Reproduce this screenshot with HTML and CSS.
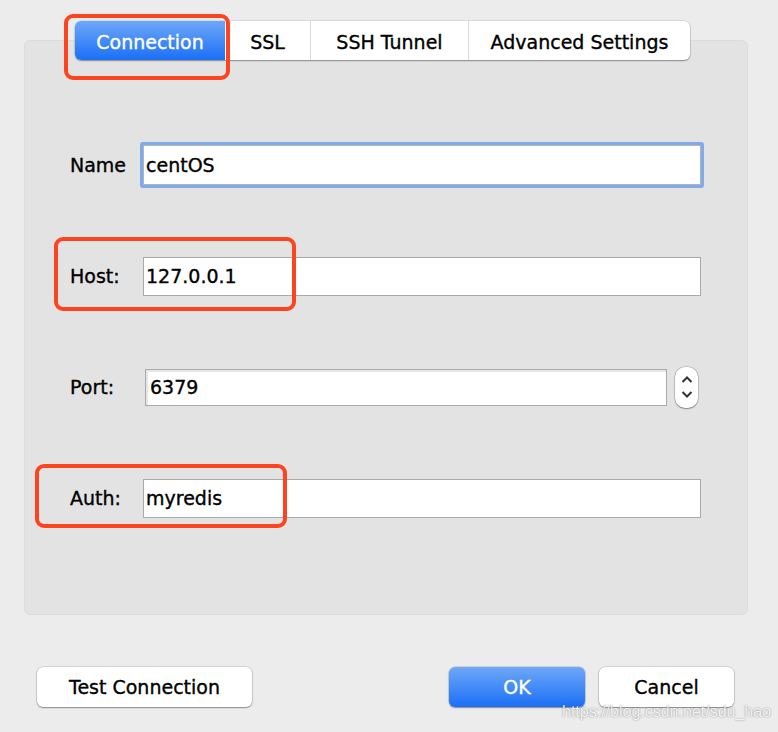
FILE: index.html
```html
<!DOCTYPE html>
<html lang="en">
<head>
    <meta charset="UTF-8">
    <meta name="viewport" content="width=device-width, initial-scale=1.0">
    <title>Connection</title>
    <link rel="stylesheet" href="styles.css">
</head>
<body>

    <div class="window">
        <div class="panel">
            <!-- Tabs -->
            <div class="tabs">
                <div class="tab tab-active tab-conn">Connection</div>
                <div class="tab tab-ssl">SSL</div>
                <div class="tab tab-ssh">SSH Tunnel</div>
                <div class="tab tab-adv">Advanced Settings</div>
            </div>

            <!-- Form -->
            <div class="form">
                <div class="row">
                    <span class="label">Name</span>
                    <div class="field field-focus">centOS</div>
                </div>
                <div class="row">
                    <span class="label">Host:</span>
                    <div class="field">127.0.0.1</div>
                </div>
                <div class="row">
                    <span class="label">Port:</span>
                    <div class="field field-port">6379</div>
                    <div class="stepper">
                        <svg width="12" height="30" viewBox="0 0 12 30">
                            <path d="M1.5 10 L6 5.5 L10.5 10" fill="none" stroke="#333" stroke-width="2"/>
                            <path d="M1.5 20 L6 24.5 L10.5 20" fill="none" stroke="#333" stroke-width="2"/>
                        </svg>
                    </div>
                </div>
                <div class="row">
                    <span class="label">Auth:</span>
                    <div class="field">myredis</div>
                </div>
            </div>
        </div>

        <!-- Buttons -->
        <div class="actions">
            <button class="btn btn-test">Test Connection</button>
            <div class="actions-right">
                <button class="btn btn-primary btn-ok">OK</button>
                <button class="btn btn-cancel">Cancel</button>
            </div>
        </div>

        <!-- Annotations -->
        <div class="mark mark-conn"></div>
        <div class="mark mark-host"></div>
        <div class="mark mark-auth"></div>
        <div class="watermark">https://blog.csdn.net/sdu_hao</div>
    </div>

</body>
</html>
```

FILE: styles.css
```css
body {
    margin: 0;
    padding: 0;
    background: #ececec;
    font-family: "DejaVu Sans", sans-serif;
    font-size: 19px;
    color: #000;
    -webkit-text-stroke: 0.35px currentColor;
}
.window {
    position: relative;
    width: 778px;
    height: 732px;
    padding-top: 40px;
    box-sizing: border-box;
}
.panel {
    margin-left: 24px;
    width: 724px;
    height: 575px;
    box-sizing: border-box;
    background: #e3e3e3;
    border: 1px solid #dcdcdc;
    border-radius: 6px;
}
.tabs {
    display: flex;
    width: 615px;
    height: 39px;
    margin-top: -20px;
    margin-left: 50px;
    background: white;
    border-radius: 6px;
    box-shadow: 0 0 0 0.5px rgba(0, 0, 0, 0.15), 0 1px 1.5px rgba(0, 0, 0, 0.35);
}
.tab {
    display: flex;
    align-items: center;
    justify-content: center;
    height: 39px;
    padding-top: 2px;
    border-right: 1px solid #dadada;
    box-sizing: border-box;
}
.tab:last-child {
    border-right: none;
}
.tab-active {
    color: white;
    background: linear-gradient(#6ea8f8, #1b6ff6);
    border-radius: 6px 0 0 6px;
    border-right: none;
}
.tab-conn { width: 150px; }
.tab-ssl { width: 86px; }
.tab-ssh { width: 158px; }
.tab-adv { width: 221px; }

.form {
    display: flex;
    flex-direction: column;
    gap: 71px;
    padding-top: 85px;
    padding-left: 45px;
}
.row {
    display: flex;
    align-items: center;
    height: 40px;
}
.label {
    width: 73px;
}
.field {
    width: 558px;
    height: 39px;
    box-sizing: border-box;
    background: white;
    border: 1px solid #aaa;
    padding-left: 2px;
    display: flex;
    align-items: center;
}
.field-focus {
    height: 40px;
    border-color: #b5b5b5;
    border-radius: 1px;
    box-shadow: 0 0 0 3px #80aaee;
}
.field-port {
    width: 522px;
    height: 37px;
    margin-left: 2px;
    padding-left: 4px;
    box-shadow: inset 2px 2px 0 #e6e6e6;
}
.stepper {
    width: 23px;
    height: 41px;
    margin-left: 8px;
    box-sizing: border-box;
    background: white;
    border-radius: 10px;
    box-shadow: 0 0 0 0.5px rgba(0, 0, 0, 0.25), 0 1px 1.5px rgba(0, 0, 0, 0.3);
    display: flex;
    align-items: center;
    justify-content: center;
}

.actions {
    display: flex;
    justify-content: space-between;
    margin-top: 52px;
    padding-left: 37px;
    padding-right: 44px;
}
.actions-right {
    display: flex;
    gap: 14px;
}
.btn {
    height: 40px;
    font-family: "DejaVu Sans", sans-serif;
    font-size: 19px;
    color: black;
    background: white;
    border: none;
    border-radius: 6px;
    padding: 0;
    -webkit-text-stroke: 0.35px currentColor;
    box-shadow: 0 0 0 0.5px rgba(0, 0, 0, 0.2), 0 1px 1.5px rgba(0, 0, 0, 0.35);
}
.btn-test { width: 215px; }
.btn-ok { width: 136px; }
.btn-cancel { width: 135px; }
.btn-primary {
    color: white;
    background: linear-gradient(#6ea8f8, #1b6ff6);
}

.mark {
    position: absolute;
    border: 4px solid #fd4421;
    border-radius: 9px;
    box-sizing: border-box;
}
.mark-conn {
    left: 64px;
    top: 14px;
    width: 166px;
    height: 66px;
}
.mark-host {
    left: 54px;
    top: 237px;
    width: 242px;
    height: 74px;
}
.mark-auth {
    left: 35px;
    top: 464px;
    width: 252px;
    height: 64px;
}
.watermark {
    position: absolute;
    left: 562px;
    top: 703px;
    font-family: "Liberation Sans", Arial, sans-serif;
    font-size: 16px;
    color: rgba(255, 255, 255, 0.9);
    -webkit-text-stroke: 0;
    text-shadow: 0 0 1.5px rgba(0, 0, 0, 0.5);
}
```
